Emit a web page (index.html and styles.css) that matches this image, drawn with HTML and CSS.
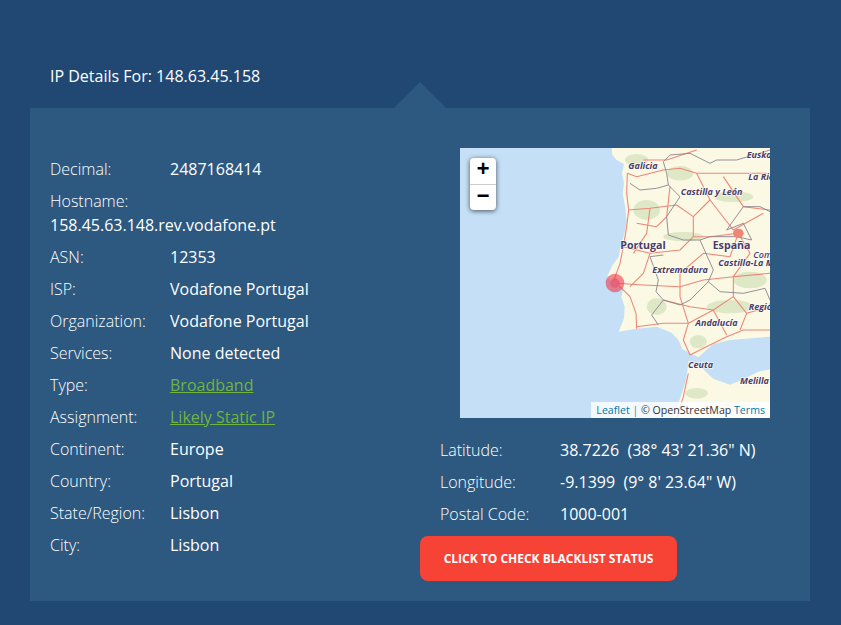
FILE: index.html
```html
<!DOCTYPE html>
<html lang="en">
<head>
<meta charset="utf-8">
<title>IP Details</title>
<link rel="stylesheet" href="styles.css">
</head>
<body>
<main class="page">
  <h1 class="heading">IP Details For: 148.63.45.158</h1>
  <section class="panel">
    <span class="arrow"></span>
    <div class="col-left">
      <dl class="facts">
        <div class="fact"><dt>Decimal:</dt><dd>2487168414</dd></div>
        <div class="fact fact-wrap"><dt>Hostname:</dt><dd>158.45.63.148.rev.vodafone.pt</dd></div>
        <div class="fact"><dt>ASN:</dt><dd>12353</dd></div>
        <div class="fact"><dt>ISP:</dt><dd>Vodafone Portugal</dd></div>
        <div class="fact"><dt>Organization:</dt><dd>Vodafone Portugal</dd></div>
        <div class="fact"><dt>Services:</dt><dd>None detected</dd></div>
        <div class="fact"><dt>Type:</dt><dd><a href="#">Broadband</a></dd></div>
        <div class="fact"><dt>Assignment:</dt><dd><a href="#">Likely Static IP</a></dd></div>
        <div class="fact"><dt>Continent:</dt><dd>Europe</dd></div>
        <div class="fact"><dt>Country:</dt><dd>Portugal</dd></div>
        <div class="fact"><dt>State/Region:</dt><dd>Lisbon</dd></div>
        <div class="fact"><dt>City:</dt><dd>Lisbon</dd></div>
      </dl>
    </div>
    <div class="col-right">
      <div class="map">
        <svg class="map-svg" viewBox="30 24 930 810" aria-hidden="true">
          <rect x="30" y="24" width="930" height="810" fill="#c4dff6"/>
          <path class="land" d="M485 24 L487 45 L500 60 L522 72 L516 100 L522 130 L518 160 L526 205 L530 245 L522 285 L512 320 L506 350 L486 378 L472 408 L490 435 L520 445 L514 470 L524 500 L522 535 L506 575 L560 566 L620 560 L665 578 L685 600 L698 628 L745 652 L790 612 L840 600 L960 590 L960 24 Z"/>
          <path class="land" d="M716 662 L745 676 L762 690 L790 716 L840 734 L880 718 L925 695 L960 688 L960 834 L668 834 L692 770 L708 720 Z"/>
          <g class="green">
            <ellipse cx="690" cy="100" rx="40" ry="22"/><ellipse cx="560" cy="60" rx="35" ry="18"/><ellipse cx="850" cy="170" rx="60" ry="16"/>
            <ellipse cx="590" cy="210" rx="40" ry="30"/><ellipse cx="700" cy="290" rx="60" ry="14"/><ellipse cx="620" cy="500" rx="30" ry="25"/>
            <ellipse cx="840" cy="500" rx="70" ry="20"/><ellipse cx="745" cy="605" rx="26" ry="20"/><ellipse cx="900" cy="420" rx="50" ry="25"/>
            <ellipse cx="740" cy="760" rx="34" ry="16"/><ellipse cx="850" cy="800" rx="45" ry="14"/>
          </g>
          <g class="roads">
            <path d="M532 100 L530 160 L536 210 L530 260 L520 320 L510 370 L492 420"/>
            <path d="M536 210 L600 205 L680 195 L730 230 L780 180 L850 270 L940 220"/>
            <path d="M780 180 L740 100 L690 85 L640 90 L560 110 L532 100"/>
            <path d="M740 100 L830 100 L950 100"/>
            <path d="M730 230 L730 290 L690 330 L600 340 L520 320"/>
            <path d="M865 280 L780 290 L730 290"/>
            <path d="M865 280 L900 340 L850 410 L850 470 L790 510 L715 550 L640 550 L560 560"/>
            <path d="M865 280 L840 350 L760 340 L690 400 L690 470 L715 550"/>
            <path d="M500 430 L580 435 L690 440 L760 420 L850 410 L960 400"/>
            <path d="M500 430 L540 470 L558 520 L560 566"/>
            <path d="M600 340 L580 400 L540 440"/>
            <path d="M715 550 L700 600 L720 645 L760 625 L830 590 L880 570 L960 570"/>
            <path d="M790 510 L830 585"/>
            <path d="M850 470 L890 520 L870 570"/>
            <path d="M890 520 L960 500"/>
            <path d="M660 140 L650 230 L620 260 L560 250"/>
            <path d="M600 205 L590 280 L550 340"/>
            <path d="M820 110 L880 200 L960 210"/>
            <path d="M715 700 L700 770 L680 834"/>
            <path d="M580 60 L650 60 L740 30"/>
            <path d="M640 480 L720 500 L790 510"/>
          </g>
          <g class="borders">
            <path d="M540 130 L570 150 L620 145 L655 135 L650 100 L640 65 L660 45 L720 40 L780 70 L800 60 L860 60 L960 30"/>
            <path d="M655 135 L690 170 L650 230 L655 285 L700 300 L750 300 L770 345 L790 390 L775 425 L810 455 L880 460 L945 445 L960 480"/>
            <path d="M775 425 L720 480 L690 495 L640 480 L605 525 L625 555"/>
            <path d="M640 345 L600 350 L625 420 L618 455 L640 480"/>
            <path d="M830 270 L880 200 L930 200 L960 215"/>
            <path d="M830 270 L880 250 L905 300 L860 290 L780 290 L750 300"/>
          </g>
          <g class="city"><ellipse cx="865" cy="280" rx="16" ry="14"/></g>
          <circle class="pin-outer" cx="495" cy="429" r="28"/>
          <circle class="pin-inner" cx="495" cy="429" r="14"/>
          <g class="labels-i">
            <text x="535" y="88">Galicia</text>
            <text x="692" y="164">Castilla y León</text>
            <text x="890" y="54">Euskadi</text>
            <text x="895" y="119">La Rioja</text>
            <text x="607" y="400">Extremadura</text>
            <text x="805" y="378">Castilla-La Mancha</text>
            <text x="896" y="510">Región de Murcia</text>
            <text x="736" y="559">Andalucía</text>
            <text x="714" y="684">Ceuta</text>
            <text x="870" y="732">Melilla</text>
          </g>
          <g class="labels-b">
            <text x="511" y="326">Portugal</text>
            <text x="788" y="328">España</text>
            <text x="910" y="354" class="tiny">Comunidad</text>
          </g>
        </svg>
        <div class="zoom">
          <a class="zoom-btn" href="#">+</a>
          <a class="zoom-btn" href="#">−</a>
        </div>
        <div class="attribution"><a href="#">Leaflet</a> <span class="sep">|</span> © OpenStreetMap <a href="#">Terms</a></div>
      </div>
      <dl class="facts facts-geo">
        <div class="fact"><dt>Latitude:</dt><dd>38.7226&nbsp; (38° 43' 21.36" N)</dd></div>
        <div class="fact"><dt>Longitude:</dt><dd>-9.1399&nbsp; (9° 8' 23.64" W)</dd></div>
        <div class="fact"><dt>Postal Code:</dt><dd>1000-001</dd></div>
      </dl>
      <a class="cta" href="#">Click to check blacklist status</a>
    </div>
  </section>
</main>
</body>
</html>
```
FILE: styles.css
```css
* { box-sizing: border-box; }
html, body { margin: 0; padding: 0; }
body {
  width: 841px;
  height: 625px;
  overflow: hidden;
  background: #204872;
  color: #fff;
  font-family: "Open Sans", sans-serif;
  font-size: 16px;
  line-height: 24px;
}
.page { padding: 64px 31px 0 30px; }
.heading {
  margin: 0;
  padding: 0 20px;
  font-size: 16px;
  font-weight: 400;
  line-height: 24px;
}
.panel {
  position: relative;
  display: flex;
  height: 493px;
  margin-top: 20px;
  padding: 49px 0 0 20px;
  background: #2d5880;
}
.arrow {
  position: absolute;
  left: 364px;
  top: -26px;
  width: 52px;
  height: 26px;
  background: #2d5880;
  clip-path: polygon(50% 0, 100% 100%, 0 100%);
}
.col-left { width: 370px; }
.col-right { width: 350px; margin-top: -9px; }
.facts { margin: 0; display: flex; flex-direction: column; gap: 8px; }
.fact { display: flex; }
.fact-wrap { display: block; }
dt { width: 120px; flex: none; font-weight: 300; }
.fact-wrap dt { width: auto; }
dd { margin: 0; font-weight: 400; white-space: nowrap; }
dd a { color: #6fb43f; text-decoration: underline; font-weight: 400; }
.map {
  position: relative;
  width: 310px;
  height: 270px;
  margin-left: 40px;
  overflow: hidden;
  background: #c4dff6;
}
.map-svg { display: block; width: 310px; height: 270px; }
.land { fill: #fbf8e4; }
.green ellipse { fill: #dfe8c6; }
.roads path { fill: none; stroke: #ee8677; stroke-width: 3.2; stroke-linejoin: round; }
.borders path { fill: none; stroke: #857f8c; stroke-width: 2.6; stroke-linejoin: round; }
.city ellipse { fill: #ee8677; }
.pin-outer { fill: #f0394d; fill-opacity: .6; }
.pin-inner { fill: #e25a78; fill-opacity: .8; }
.labels-i text, .labels-b text {
  font-family: "Open Sans", sans-serif;
  font-weight: 700;
  fill: #4a3d66;
  stroke: rgba(255,255,255,.75);
  stroke-width: 4px;
  paint-order: stroke;
}
.labels-i text { font-size: 27px; font-style: italic; }
.labels-b text { font-size: 32px; }
.labels-b .tiny { font-size: 27px; font-weight: 600; font-style: italic; }
.zoom {
  position: absolute;
  left: 10px;
  top: 10px;
  width: 26px;
  border-radius: 4px;
  background: #fff;
  box-shadow: 0 1px 5px rgba(0,0,0,.65);
  overflow: hidden;
}
.zoom-btn {
  display: block;
  width: 26px;
  height: 26px;
  color: #000;
  font: 700 22px/26px "Lucida Console", "Liberation Mono", monospace;
  text-align: center;
  text-decoration: none;
}
.zoom-btn + .zoom-btn { border-top: 1px solid #ccc; }
.attribution {
  position: absolute;
  right: 0;
  bottom: 0;
  padding: 0 5px;
  background: rgba(255,255,255,.8);
  color: #333;
  font-size: 10.6px;
  font-weight: 400;
  line-height: 16px;
  white-space: nowrap;
}
.attribution a { color: #0078a8; text-decoration: none; }
.sep { color: #777; }
.facts-geo { margin: 20px 0 0 20px; }
.cta {
  display: inline-block;
  width: 257px;
  height: 45px;
  margin-top: 10px;
  border-radius: 8px;
  background: #f64336;
  color: #fff;
  font-size: 12px;
  font-weight: 700;
  line-height: 45px;
  text-align: center;
  text-transform: uppercase;
  text-decoration: none;
}
```
